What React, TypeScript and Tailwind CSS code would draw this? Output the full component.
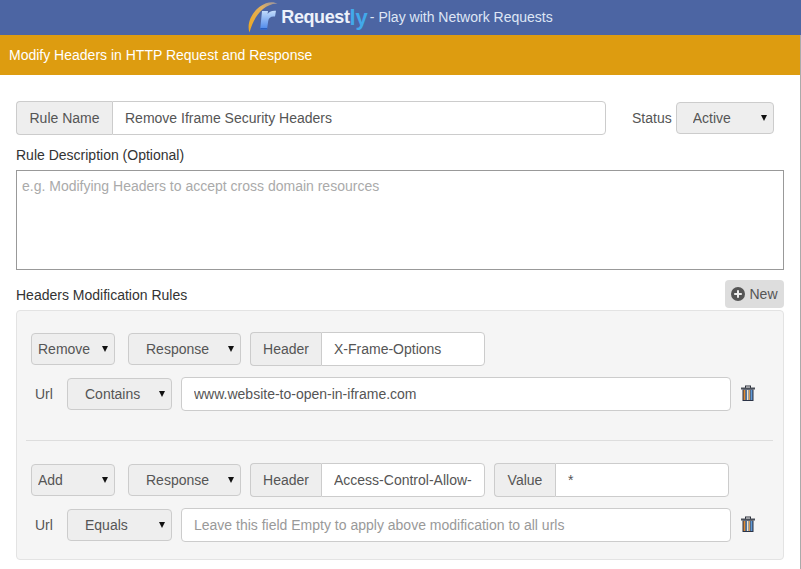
const control = 'rounded border border-[#ccc] text-[14px] text-[#555]';
const addon = 'flex h-[34px] items-center justify-center border border-[#ccc] bg-[#eee] text-[14px] text-[#555]';

function LogoMark() {
  return (
    <svg width="30" height="33" viewBox="0 0 30 33" className="shrink-0">
      <defs>
        <linearGradient id="swoosh" x1="0" y1="1" x2="1" y2="0">
          <stop offset="0" stopColor="#f0a818" />
          <stop offset="0.65" stopColor="#e0b060" />
          <stop offset="1" stopColor="#8f90a8" />
        </linearGradient>
        <linearGradient id="letter" x1="0" y1="0" x2="0" y2="1">
          <stop offset="0" stopColor="#c3dcfb" />
          <stop offset="1" stopColor="#4a87ea" />
        </linearGradient>
      </defs>
      <path d="M1.5 31.5C-2 22 5 7 18 2.2C22.5 0.6 27 0.8 29.5 2.8C24.5 2.4 19.5 4.4 15 8C8.5 13.5 4 22 1.5 31.5Z" fill="url(#swoosh)" />
      <path d="M14 10H20L19.6 13C21 10.8 23.5 9.4 28 9.8L27 15.5C23 15 20.8 16.5 20.2 20L19 28.5H12.2Z" fill="url(#letter)" />
      <path d="M12.2 28.5H19L19.2 27H12.4Z" fill="#2a5fc0" />
    </svg>
  );
}

function PlusIcon() {
  return (
    <svg width="14" height="14" viewBox="0 0 14 14" className="shrink-0">
      <circle cx="7" cy="7" r="7" fill="#555" />
      <path d="M6 3.2H8V6H10.8V8H8V10.8H6V8H3.2V6H6Z" fill="#eee" />
    </svg>
  );
}

function TrashIcon() {
  return (
    <svg width="14" height="16" viewBox="0 0 14 16" className="block shrink-0">
      <path d="M4 3V0.5H10V3H9V1.5H5V3Z" fill="#2a2f3a" />
      <rect x="0" y="2.5" width="14" height="2" fill="#4a4f58" />
      <rect x="1.5" y="4.5" width="11" height="11.5" fill="#2b3346" />
      <rect x="2.6" y="5" width="1.8" height="10" fill="#e08a30" />
      <rect x="4.6" y="5" width="1" height="10" fill="#5f9ad8" />
      <rect x="6" y="5" width="1.6" height="10" fill="#ece6d8" />
      <rect x="8" y="5" width="1.2" height="10" fill="#d99a50" />
      <rect x="9.6" y="5" width="1.8" height="10" fill="#5f9ad8" />
    </svg>
  );
}

function Select({ value, className, width }: { value: string; className: string; width: string }) {
  return (
    <div className={`relative shrink-0 ${width}`}>
      <select defaultValue={value} className={`${control} block h-[32px] w-full appearance-none bg-[#eee] outline-none ${className}`}>
        <option>{value}</option>
      </select>
      <svg width="6" height="6" viewBox="0 0 6 6" className="pointer-events-none absolute right-[7px] top-[13px]">
        <path d="M0 0H6L3 6Z" fill="#111" />
      </svg>
    </div>
  );
}

function Group({ label, value, labelW, className }: { label: string; value: string; labelW: string; className: string }) {
  return (
    <div className={`flex shrink-0 ${className}`}>
      <span className={`${addon} ${labelW} rounded-l border-r-0`}>{label}</span>
      <input readOnly value={value} className={`${control} h-[34px] min-w-0 flex-1 rounded-l-none bg-white px-3 outline-none`} />
    </div>
  );
}

function UrlRow({ op, value, placeholder }: { op: string; value?: string; placeholder?: string }) {
  return (
    <div className="flex h-[34px] items-center">
      <span className="ml-[4px] w-[32px] text-[14px] text-[#555]">Url</span>
      <Select value={op} width="w-[105px]" className="pl-[17px]" />
      <input
        readOnly
        value={value}
        placeholder={placeholder}
        className={`${control} ml-[9px] h-[34px] w-[550px] bg-white px-3 outline-none placeholder:text-[#999]`}
      />
      <span className="mb-[3px] ml-[10px]">
        <TrashIcon />
      </span>
    </div>
  );
}

export default function App() {
  return (
    <div className="h-[569px] w-[801px] overflow-hidden bg-white font-['Liberation_Sans',sans-serif] text-[14px] text-[#333]">
      <div className="flex h-[35px] items-center justify-center bg-[#4c65a3]">
        <LogoMark />
        <span className="ml-[3px] text-[18px] font-bold tracking-[-0.4px] text-[#eef2fb]">Request</span>
        <span className="text-[22px] font-bold text-[#42a9ea]">ly</span>
        <span className="ml-[2px] text-[14px] text-[#dfe6f5]">- Play with Network Requests</span>
      </div>

      <div className="h-[534px] border-r border-[#aaa]">
        <div className="flex h-[40px] items-center bg-[#dd9c10] px-[9px] text-[14px] text-white">
          Modify Headers in HTTP Request and Response
        </div>

        <div className="px-[16px] pt-[26px]">
          <div className="flex items-center">
            <Group label="Rule Name" value="Remove Iframe Security Headers" labelW="w-[96px]" className="w-[590px]" />
            <span className="ml-[26px] text-[14px] text-[#555]">Status</span>
            <div className="ml-[4px]">
              <Select value="Active" width="w-[98px]" className="pl-[16px]" />
            </div>
          </div>

          <div className="mt-[10px] h-[25px] text-[14px] leading-[20px] text-[#333]">Rule Description (Optional)</div>
          <textarea
            readOnly
            placeholder="e.g. Modifying Headers to accept cross domain resources"
            className="block h-[100px] w-[768px] resize-none border border-[#999] px-[5px] py-[5px] text-[14px] leading-[20px] outline-none placeholder:text-[#aaa]"
          />

          <div className="mt-[10px] flex h-[30px] items-start justify-between">
            <span className="mt-[5px] text-[14px] leading-[20px] text-[#333]">Headers Modification Rules</span>
            <button className="flex h-[28px] w-[59px] items-center justify-center gap-[4px] rounded-sm bg-[#ddd] text-[14px] text-[#555]">
              <PlusIcon />
              New
            </button>
          </div>

          <div className="h-[250px] w-[768px] rounded-sm border border-[#e3e3e3] bg-[#f5f5f5] pt-[21px]">
            <div className="pl-[14px]">
              <div className="flex h-[34px] items-center">
                <Select value="Remove" width="w-[84px]" className="pl-[6px]" />
                <div className="ml-[13px]">
                  <Select value="Response" width="w-[113px]" className="pl-[17px]" />
                </div>
                <Group label="Header" value="X-Frame-Options" labelW="w-[71px]" className="ml-[9px] w-[235px]" />
              </div>
              <div className="mt-[11px]">
                <UrlRow op="Contains" value="www.website-to-open-in-iframe.com" />
              </div>
            </div>

            <div className="ml-[9px] mr-[10px] mt-[29px] border-t border-[#ddd]" />

            <div className="mt-[22px] pl-[14px]">
              <div className="flex h-[34px] items-center">
                <Select value="Add" width="w-[84px]" className="pl-[6px]" />
                <div className="ml-[13px]">
                  <Select value="Response" width="w-[113px]" className="pl-[17px]" />
                </div>
                <Group label="Header" value="Access-Control-Allow-" labelW="w-[71px]" className="ml-[9px] w-[235px]" />
                <Group label="Value" value="*" labelW="w-[61px]" className="ml-[9px] w-[235px]" />
              </div>
              <div className="mt-[11px]">
                <UrlRow op="Equals" placeholder="Leave this field Empty to apply above modification to all urls" />
              </div>
            </div>
          </div>
        </div>
      </div>
    </div>
  );
}
